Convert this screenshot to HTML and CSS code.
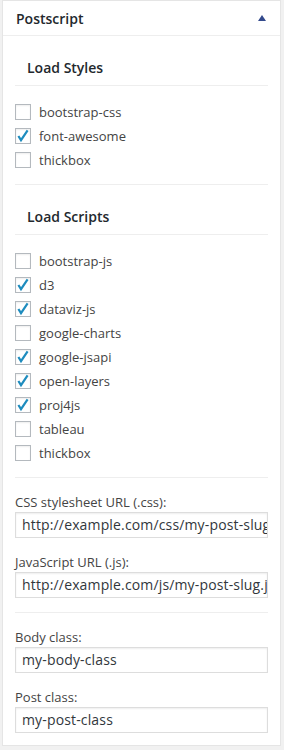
FILE: index.html
```html
<!DOCTYPE html>
<html lang="en">
<head>
    <meta charset="UTF-8">
    <title>Postscript</title>
    <link rel="stylesheet" href="styles.css">
</head>
<body>
    <div class="postbox">
        <div class="postbox-header">
            <h2>Postscript</h2>
            <span class="toggle-arrow"></span>
        </div>

        <div class="inside">
            <h3 class="group-title">Load Styles</h3>
            <ul class="check-list">
                <li><span class="checkbox"></span>bootstrap-css</li>
                <li><span class="checkbox checked"></span>font-awesome</li>
                <li><span class="checkbox"></span>thickbox</li>
            </ul>

            <h3 class="group-title">Load Scripts</h3>
            <ul class="check-list">
                <li><span class="checkbox"></span>bootstrap-js</li>
                <li><span class="checkbox checked"></span>d3</li>
                <li><span class="checkbox checked"></span>dataviz-js</li>
                <li><span class="checkbox"></span>google-charts</li>
                <li><span class="checkbox checked"></span>google-jsapi</li>
                <li><span class="checkbox checked"></span>open-layers</li>
                <li><span class="checkbox checked"></span>proj4js</li>
                <li><span class="checkbox"></span>tableau</li>
                <li><span class="checkbox"></span>thickbox</li>
            </ul>

            <div class="field-group">
                <label class="field-label">CSS stylesheet URL (.css):</label>
                <div class="text-input">http://example.com/css/my-post-slug.css</div>
                <label class="field-label">JavaScript URL (.js):</label>
                <div class="text-input">http://example.com/js/my-post-slug.js</div>
            </div>

            <div class="field-group last">
                <label class="field-label">Body class:</label>
                <div class="text-input">my-body-class</div>
                <label class="field-label">Post class:</label>
                <div class="text-input">my-post-class</div>
            </div>
        </div>
    </div>

    <script>
        // marca las casillas activas con el check azul
        var marcadas = document.querySelectorAll(".checkbox.checked");
        for (var i = 0; i < marcadas.length; i++) {
            marcadas[i].innerHTML = '<svg width="14" height="14" viewBox="0 0 14 14"><path d="M2.4 7 L5 11.2 L11.6 1.4" fill="none" stroke="#1e8cbe" stroke-width="2.2"/></svg>';
        }
    </script>
</body>
</html>
```

FILE: styles.css
```css
body {
    margin: 0;
    background-color: #f1f1f1;
    font-family: "Open Sans", "Liberation Sans", sans-serif;
    color: #444;
}

.postbox {
    margin: 0 3px 0 2px;
    background-color: #fff;
    border: 1px solid #e5e5e5;
}

.postbox-header {
    height: 34px;
    border-bottom: 1px solid #eee;
    padding: 0 14px 0 13px;
    display: flex;
    align-items: center;
    justify-content: space-between;
}

.postbox-header h2 {
    margin: 0;
    font-size: 14px;
    font-weight: 600;
    color: #23282d;
}

.toggle-arrow {
    width: 0;
    height: 0;
    border-left: 4px solid transparent;
    border-right: 4px solid transparent;
    border-bottom: 6px solid #334a8c;
    margin-top: -1px;
}

.inside {
    padding: 0 12px;
}

.group-title {
    margin: 0;
    padding: 22px 12px 8px;
    line-height: 19px;
    font-size: 14px;
    font-weight: 600;
    color: #23282d;
    border-bottom: 1px solid #eee;
}

.check-list {
    list-style: none;
    margin: 0;
    padding: 14px 0 12px;
    border-bottom: 1px solid #eee;
}

.check-list li {
    height: 24px;
    display: flex;
    align-items: center;
    font-size: 13px;
}

.checkbox {
    width: 14px;
    height: 14px;
    border: 1px solid #b4b9be;
    box-shadow: inset 0 1px 2px rgba(0, 0, 0, 0.07);
    margin-right: 8px;
    display: flex;
}

.field-group {
    padding: 15px 0 14px;
    border-bottom: 1px solid #eee;
}

.field-group.last {
    border-bottom: none;
    padding-bottom: 12px;
}

.field-label {
    display: block;
    font-size: 13px;
    line-height: 18px;
    margin-bottom: 1px;
}

.text-input {
    height: 24px;
    line-height: 24px;
    border: 1px solid #ddd;
    box-shadow: inset 0 1px 2px rgba(0, 0, 0, 0.07);
    padding: 0 6px;
    font-size: 14px;
    letter-spacing: 0.15px;
    color: #32373c;
    white-space: nowrap;
    overflow: hidden;
    margin-bottom: 15px;
}

.text-input:last-child {
    margin-bottom: 0;
}
```
